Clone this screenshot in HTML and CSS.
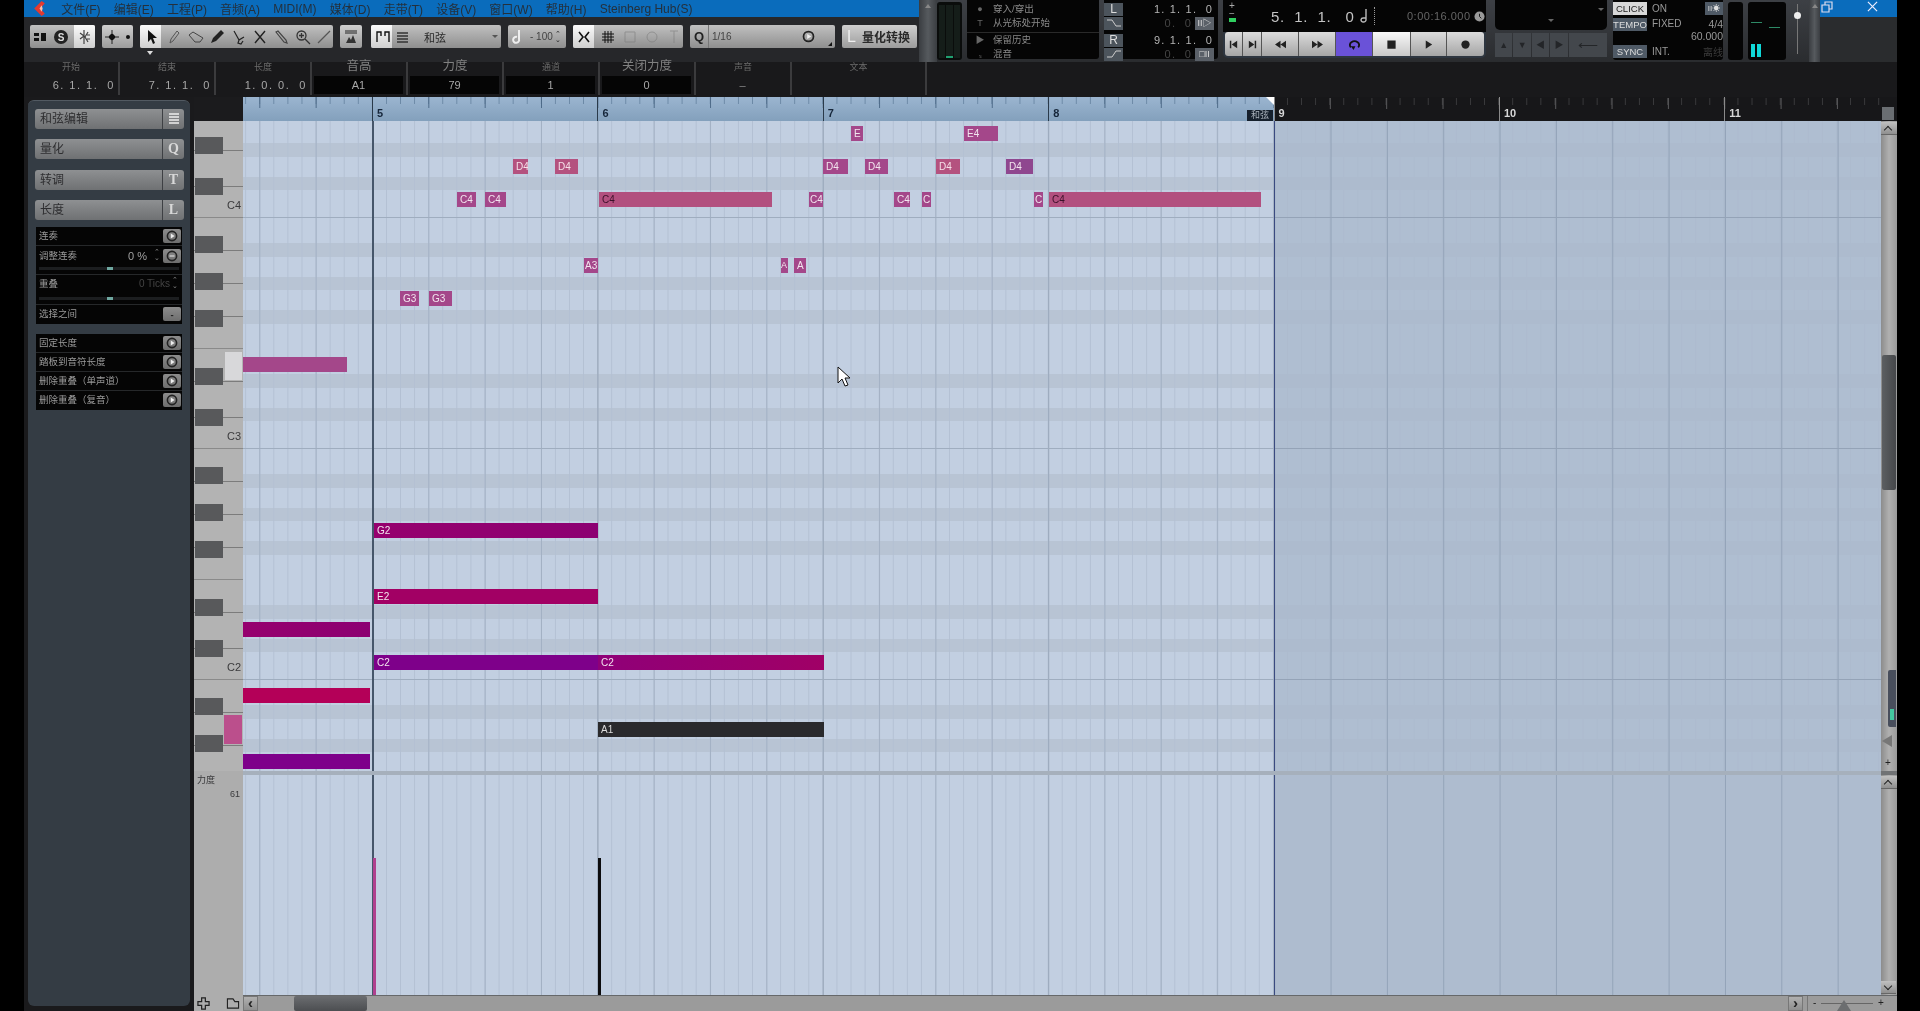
FILE: index.html
```html
<!DOCTYPE html>
<html lang="zh-CN">
<head>
    <meta charset="UTF-8">
    <title>Cubase Key Editor</title>
    <link rel="stylesheet" href="styles.css">
</head>
<body>
<svg class="defs" width="0" height="0">
    <symbol id="play-circle" viewBox="0 0 12 12"><circle cx="6" cy="6" r="4.6" fill="none" stroke="#222" stroke-width="1.6"/><path d="M4.8 3.6 8.6 6 4.8 8.4z" fill="#eee"/></symbol>
</svg>

<div class="app">
    <!-- Top area -->
    <div class="top-row">
        <div class="top-left">
            <div class="menubar">
                <svg class="logo" viewBox="0 0 14 16" width="15" height="17"><path d="M9 1 2 8l7 7 3-2-4-5 4-5z" fill="#e23a30"/><path d="M9 5 7 8l2 3 1-3z" fill="#f3c0b0"/></svg>
                <span>文件(F)</span><span>编辑(E)</span><span>工程(P)</span><span>音频(A)</span><span>MIDI(M)</span><span>媒体(D)</span><span>走带(T)</span><span>设备(V)</span><span>窗口(W)</span><span>帮助(H)</span><span>Steinberg Hub(S)</span>
            </div>
            <div class="toolbar">
                <div class="tb-group w-65">
                    <svg class="ic" viewBox="0 0 16 16"><path d="M2 4h5v3H2zM2 9h5v3H2zM9 4h5v8H9z" fill="#111"/></svg>
                    <svg class="ic" viewBox="0 0 16 16"><circle cx="8" cy="8" r="7" fill="#222"/><text x="8" y="11.5" text-anchor="middle" font-size="10" font-weight="700" fill="#ddd" font-family="Liberation Sans">S</text></svg>
                    <div class="tb-on w-21"><svg class="ic" viewBox="0 0 16 16"><path d="M7 1v14M3 4l4 3-4 3M11 3 8 8l3 5M13 6h-3M13 10h-3" fill="none" stroke="#444" stroke-width="1.2"/></svg></div>
                </div>
                <div class="tb-group w-31 light">
                    <svg class="ic" viewBox="0 0 16 16"><path d="M8 1v3M8 12v3M1 8h3M12 8h3" stroke="#222" fill="none"/><path d="M8 4l4 4-4 4-4-4z" fill="#111"/></svg>
                    <span class="dot"></span>
                </div>
                <div class="tool-wrap">
                    <div class="tb-group w-193 tools">
                        <div class="tb-on w-21"><svg class="ic" viewBox="0 0 16 16"><path d="M5 1v12l3-3 2 5 2-1-2-5h4z" fill="#111"/></svg></div>
                        <svg class="ic" viewBox="0 0 16 16"><path d="M4 14 5 10l6-8 2 2-6 8z" fill="none" stroke="#555"/></svg>
                        <svg class="ic" viewBox="0 0 16 16"><path d="M1 6l4-3 10 6-3 4H7z" fill="none" stroke="#444"/></svg>
                        <svg class="ic" viewBox="0 0 16 16"><path d="M2 14l2-5 6-6 3 3-6 6zM10 3l2-2 3 3-2 2" fill="#222"/></svg>
                        <svg class="ic" viewBox="0 0 16 16"><path d="M3 2l5 9M13 8l-5 3-1 3 3 1 2-3" fill="none" stroke="#222" stroke-width="1.2"/></svg>
                        <svg class="ic" viewBox="0 0 16 16"><path d="M3 2l10 12M13 2 3 14" fill="none" stroke="#222" stroke-width="1.4"/></svg>
                        <svg class="ic" viewBox="0 0 16 16"><path d="M3 3l2-1 8 9 1 3-3-1z" fill="none" stroke="#444" stroke-width="1.2"/></svg>
                        <svg class="ic" viewBox="0 0 16 16"><circle cx="6.5" cy="6.5" r="4.5" fill="none" stroke="#333" stroke-width="1.3"/><path d="M10 10l5 5M6.5 4v5M4 6.5h5" stroke="#333" stroke-width="1.3"/></svg>
                        <svg class="ic" viewBox="0 0 16 16"><path d="M2 14 14 2" stroke="#555" stroke-width="1.2"/></svg>
                    </div>
                    <span class="tool-mark"></span>
                </div>
                <div class="tb-group w-22 light">
                    <svg class="ic" viewBox="0 0 16 16"><path d="M2 2h12M2 4h12" stroke="#222"/><path d="M3 14l3-6 2 3 2-5 3 8z" fill="#333"/></svg>
                </div>
                <div class="tb-group w-130 chord">
                    <div class="tb-on w-21"><svg class="ic" viewBox="0 0 16 16"><path d="M2 13V3h4v4M10 7V3h4v10" fill="none" stroke="#111" stroke-width="1.4"/></svg></div>
                    <svg class="ic" viewBox="0 0 16 16"><path d="M2 4h11M2 7h11M2 10h11M2 13h11" stroke="#333" stroke-width="1.4"/></svg>
                    <span class="tb-text">和弦</span>
                    <span class="caret"></span>
                </div>
                <div class="tb-group w-58 swing">
                    <svg class="ic" viewBox="0 0 16 16"><path d="M8 1v9a3 3 0 1 1-2-2" fill="none" stroke="#eee" stroke-width="2"/></svg>
                    <span class="tb-text small">- 100</span>
                    <span class="spin">⌃<br>⌄</span>
                </div>
                <div class="tb-group w-109 grid-btns">
                    <div class="tb-on w-21"><svg class="ic" viewBox="0 0 16 16"><path d="M3 3l4 5-4 5M13 3 9 8l4 5" fill="none" stroke="#111" stroke-width="1.6"/></svg></div>
                    <svg class="ic" viewBox="0 0 16 16"><path d="M5 2v12M8 2v12M11 2v12M2 5h12M2 8h12M2 11h12" stroke="#111"/></svg>
                    <svg class="ic faint" viewBox="0 0 16 16"><path d="M3 3h10v10H3z" fill="none" stroke="#777"/></svg>
                    <svg class="ic faint" viewBox="0 0 16 16"><circle cx="8" cy="8" r="5" fill="none" stroke="#777"/></svg>
                    <svg class="ic faint" viewBox="0 0 16 16"><path d="M8 2v12M4 2h8" stroke="#777"/></svg>
                </div>
                <div class="tb-group w-145 quant">
                    <span class="q">Q</span>
                    <span class="tb-text small">1/16</span>
                    <svg class="ic push" viewBox="0 0 12 12"><use href="#play-circle"/></svg>
                    <span class="corner"></span>
                </div>
                <div class="tb-group w-75 light quant-btn"><span class="big-l">L</span><span class="tb-text">量化转换</span></div>
            </div>
        </div>

        <div class="transport-panel">
            <div class="strip"><span class="strip-up"></span></div>
            <div class="meter-box"><i></i><i></i><i></i></div>
            <div class="mode-box">
                <div class="mode-row"><span class="mode-ic">●</span>穿入/穿出</div>
                <div class="mode-row"><span class="mode-ic">T</span>从光标处开始</div>
                <div class="mode-row sep"><span class="mode-ic">▶</span>保留历史</div>
                <div class="mode-row"><span class="mode-ic">ₛ</span>混音</div>
            </div>
            <div class="locator-box">
                <div class="loc-row"><span class="loc-btn">L</span><span class="loc-val">1. 1. 1.  0</span></div>
                <div class="loc-row"><span class="loc-btn"><svg viewBox="0 0 16 10" width="16" height="10"><path d="M1 2h5l4 6h5" fill="none" stroke="#ccc"/></svg></span><span class="loc-val dim">0.  0</span><span class="loc-mini">II▷</span></div>
                <div class="loc-row top-gap"><span class="loc-btn">R</span><span class="loc-val">9. 1. 1.  0</span></div>
                <div class="loc-row"><span class="loc-btn"><svg viewBox="0 0 16 10" width="16" height="10"><path d="M1 8h5l4-6h5" fill="none" stroke="#ccc"/></svg></span><span class="loc-val dim">0.  0</span><span class="loc-mini">□II</span></div>
            </div>
            <div class="transport">
                <div class="position">
                    <div class="pm"><span>+</span><span>−</span><i></i></div>
                    <span class="pos-main">5.  1.  1.   0</span>
                    <svg class="note-ic" viewBox="0 0 10 16" width="10" height="16"><path d="M7 1v11a2.5 2 0 1 1-2-2h2" fill="none" stroke="#bbb" stroke-width="1.4"/></svg>
                    <span class="pos-bracket"></span>
                    <span class="pos-time">0:00:16.000</span>
                    <svg viewBox="0 0 12 12" width="11" height="11"><circle cx="6" cy="6" r="5.5" fill="#999"/><path d="M6 3v3l2 2" stroke="#111" fill="none"/></svg>
                </div>
                <div class="t-buttons">
                    <span class="t-btn w18"><svg viewBox="0 0 12 12" width="11" height="11"><path d="M2 2h1.6v8H2zM10 2v8L4 6z" fill="#222"/></svg></span>
                    <span class="t-btn w19"><svg viewBox="0 0 12 12" width="11" height="11"><path d="M8.4 2H10v8H8.4zM2 2v8l6-4z" fill="#222"/></svg></span>
                    <span class="t-btn w37"><svg viewBox="0 0 16 12" width="15" height="11"><path d="M8 2v8L2 6zM14 2v8L8 6z" fill="#222"/></svg></span>
                    <span class="t-btn w37"><svg viewBox="0 0 16 12" width="15" height="11"><path d="M2 2v8l6-4zM8 2v8l6-4z" fill="#222"/></svg></span>
                    <span class="t-btn w37 cycle"><svg viewBox="0 0 18 14" width="17" height="13"><path d="M5 10a5 4 0 1 1 8 0" fill="none" stroke="#111" stroke-width="2"/><path d="M5 9l5 0-2 4z" fill="#111"/></svg></span>
                    <span class="t-btn w38 lit"><svg viewBox="0 0 12 12" width="11" height="11"><path d="M1.5 1.5h9v9h-9z" fill="#222"/></svg></span>
                    <span class="t-btn w36"><svg viewBox="0 0 12 12" width="11" height="11"><path d="M3 1.5v9l7-4.5z" fill="#222"/></svg></span>
                    <span class="t-btn w37 last"><svg viewBox="0 0 12 12" width="11" height="11"><circle cx="6" cy="6" r="4.5" fill="#222"/></svg></span>
                </div>
            </div>
            <div class="marker-box">
                <div class="marker-top"><span class="mk-caret r"></span><span class="mk-caret"></span></div>
                <div class="marker-btns">
                    <span>▲</span><span>▼</span><span>◀</span><span>▶</span><span class="wide">⟵</span>
                </div>
            </div>
            <div class="click-box">
                <div class="click-row"><span class="c-tag on">CLICK</span><span>ON</span><span class="c-mini">II☀</span></div>
                <div class="click-row tall">
                    <span class="c-tag">TEMPO</span><span>FIXED</span>
                    <span class="c-right">4/4<br>60.000</span>
                </div>
                <div class="click-row last"><span class="c-tag">SYNC</span><span>INT.</span><span class="c-off">离线</span></div>
            </div>
            <div class="small-meter"></div>
            <div class="io-meter">
                <b class="l1"></b><b class="l2"></b><i class="c1"></i><i class="c2"></i>
            </div>
            <div class="out-slider"><span class="s-line"></span><span class="s-dot"></span></div>
            <div class="strip end"><span class="strip-up"></span></div>
        </div>

        <div class="win-col">
            <div class="winbar">
                <svg viewBox="0 0 12 12" width="12" height="12"><path d="M1 4h7v7H1zM4 4V1h7v7H8" fill="none" stroke="#dde" stroke-width="1.2"/></svg>
                <svg viewBox="0 0 12 12" width="11" height="11"><path d="M1 1l10 10M11 1 1 11" stroke="#eef" stroke-width="1.3"/></svg>
            </div>
        </div>
    </div>

    <div class="info-line">
        <div class="info-cell"><label>开始</label><span class="val">6. 1. 1.  0</span></div>
        <div class="info-cell"><label>结束</label><span class="val">7. 1. 1.  0</span></div>
        <div class="info-cell"><label>长度</label><span class="val">1. 0. 0.  0</span></div>
        <div class="info-cell boxed"><label class="big">音高</label><span class="val">A1</span></div>
        <div class="info-cell boxed"><label class="big">力度</label><span class="val">79</span></div>
        <div class="info-cell boxed"><label>通道</label><span class="val">1</span></div>
        <div class="info-cell boxed"><label class="big">关闭力度</label><span class="val">0</span></div>
        <div class="info-cell boxed none"><label>声音</label><span class="val">–</span></div>
        <div class="info-cell text-cell"><label>文本</label><span class="val"></span></div>
    </div>

    <!-- Editor -->
    <div class="workspace">
        <aside class="side">
            <div class="side-btn"><span>和弦编辑</span><b><svg viewBox="0 0 12 14" width="12" height="14"><path d="M1 2h10M1 5h10M1 8h10M1 11h10" stroke="#eee" stroke-width="1.6"/></svg></b></div>
            <div class="side-btn"><span>量化</span><b>Q</b></div>
            <div class="side-btn"><span>转调</span><b>T</b></div>
            <div class="side-btn"><span>长度</span><b>L</b></div>

            <div class="side-list first">
                <div class="side-row"><span>连奏</span><i class="go"><svg viewBox="0 0 12 12" width="12" height="12"><use href="#play-circle"/></svg></i></div>
                <div class="side-row h-29">
                    <span>调整连奏</span><em>0 %</em><u>⌃<br>⌄</u><i class="go"><svg viewBox="0 0 12 12" width="12" height="12"><circle cx="6" cy="6" r="4.6" fill="none" stroke="#222" stroke-width="1.6"/><path d="M3.5 6h5" stroke="#eee"/></svg></i>
                    <div class="fader"><s></s></div>
                </div>
                <div class="side-row h-30">
                    <span>重叠</span><em class="off">0 Ticks</em><u>⌃<br>⌄</u>
                    <div class="fader"><s></s></div>
                </div>
                <div class="side-row"><span>选择之间</span><i class="go minus">-</i></div>
            </div>

            <div class="side-list">
                <div class="side-row"><span>固定长度</span><i class="go"><svg viewBox="0 0 12 12" width="12" height="12"><use href="#play-circle"/></svg></i></div>
                <div class="side-row"><span>踏板到音符长度</span><i class="go"><svg viewBox="0 0 12 12" width="12" height="12"><use href="#play-circle"/></svg></i></div>
                <div class="side-row"><span>删除重叠（单声道）</span><i class="go"><svg viewBox="0 0 12 12" width="12" height="12"><use href="#play-circle"/></svg></i></div>
                <div class="side-row"><span>删除重叠（复音）</span><i class="go"><svg viewBox="0 0 12 12" width="12" height="12"><use href="#play-circle"/></svg></i></div>
            </div>
        </aside>

        <div class="ruler-corner"></div>
        <div class="ruler">
            <div class="ruler-loop"><span class="loop-tag">和弦</span></div>
            <div class="bars">
                <span>5</span><span>6</span><span>7</span><span>8</span><span>9</span><span>10</span><span>11</span>
            </div>
        </div>
        <div class="ruler-end"><span class="mini-down"></span></div>

        <div class="piano">
            <div class="octave">C4</div>
            <div class="octave">C3</div>
            <div class="octave">C2</div>
            <span class="key-hover"></span>
            <span class="key-pink"></span>
        </div>

        <div class="note-lane">
            <span class="past-end"></span>
            <span class="playhead"></span>

            <div class="note n-mauve" style="left:608px;top:5px;width:12px">E</div>
            <div class="note n-mauve" style="left:721px;top:5px;width:34px">E4</div>

            <div class="note n-rose" style="left:270px;top:38px;width:15px">D4</div>
            <div class="note n-rose" style="left:312px;top:38px;width:23px">D4</div>
            <div class="note n-mauve" style="left:580px;top:38px;width:25px">D4</div>
            <div class="note n-mauve" style="left:622px;top:38px;width:23px">D4</div>
            <div class="note n-rose" style="left:693px;top:38px;width:24px">D4</div>
            <div class="note n-plum" style="left:763px;top:38px;width:27px">D4</div>

            <div class="note n-mauve" style="left:214px;top:71px;width:19px">C4</div>
            <div class="note n-mauve" style="left:242px;top:71px;width:21px">C4</div>
            <div class="note n-rose-long" style="left:356px;top:71px;width:173px">C4</div>
            <div class="note n-mauve tight" style="left:566px;top:71px;width:14px">C4</div>
            <div class="note n-mauve" style="left:651px;top:71px;width:16px">C4</div>
            <div class="note n-mauve tight" style="left:679px;top:71px;width:9px">C</div>
            <div class="note n-mauve tight" style="left:791px;top:71px;width:9px">C</div>
            <div class="note n-rose-long" style="left:806px;top:71px;width:212px">C4</div>

            <div class="note n-mauve tight" style="left:341px;top:137px;width:14px">A3</div>
            <div class="note n-mauve flush" style="left:538px;top:137px;width:7px">A</div>
            <div class="note n-mauve" style="left:551px;top:137px;width:12px">A</div>

            <div class="note n-mauve" style="left:157px;top:170px;width:19px">G3</div>
            <div class="note n-mauve" style="left:186px;top:170px;width:23px">G3</div>

            <div class="note n-mauve" style="left:0;top:236px;width:104px"></div>

            <div class="note n-g2" style="left:131px;top:402px;width:224px">G2</div>
            <div class="note n-e2" style="left:131px;top:468px;width:224px">E2</div>
            <div class="note n-c2" style="left:131px;top:534px;width:224px">C2</div>
            <div class="note n-c2b" style="left:355px;top:534px;width:226px">C2</div>
            <div class="note n-a1" style="left:355px;top:601px;width:226px">A1</div>

            <div class="note n-g2" style="left:0;top:501px;width:127px"></div>
            <div class="note n-red" style="left:0;top:567px;width:127px"></div>
            <div class="note n-c2" style="left:0;top:633px;width:127px"></div>

            <svg class="mouse" viewBox="0 0 14 21" width="14" height="21"><path d="M1 1v16l4-4 3 7 3-1-3-7h5z" fill="#fff" stroke="#111"/></svg>
        </div>

        <div class="vscroll upper">
            <span class="sb-btn"></span>
            <span class="v-thumb"></span>
            <div class="v-zoom"><span class="vz-meter"></span><span class="vz-tri"></span><span class="vz-plus">+</span></div>
        </div>

        <div class="split-left"></div>
        <div class="splitter"></div>
        <div class="split-right"></div>

        <div class="vel-head"><span>力度</span><em>61</em></div>
        <div class="vel-lane">
            <span class="past-end"></span>
            <span class="playhead"></span>
            <span class="vel-bar pink" style="left:130px;height:137px"></span>
            <span class="vel-bar black" style="left:355px;height:137px"></span>
        </div>
        <div class="vscroll lower">
            <span class="sb-btn"></span>
            <span class="sb-btn down"></span>
        </div>

        <div class="corner-tools">
            <svg viewBox="0 0 14 14" width="13" height="13"><path d="M5 1h4v4h4v4H9v4H5V9H1V5h4z" fill="none" stroke="#222" stroke-width="1.3"/></svg>
            <svg viewBox="0 0 14 14" width="14" height="13"><path d="M1 2h6l2 3h4v7H1z" fill="none" stroke="#222" stroke-width="1.2"/></svg>
        </div>
        <div class="hscroll">
            <span class="hs-btn">‹</span>
            <div class="hs-track"><span class="hs-thumb"></span></div>
            <span class="hs-btn">›</span>
            <div class="hs-zoom"><span class="hz-minus">-</span><span class="hz-line"></span><span class="hz-tri"></span><span class="hz-plus">+</span></div>
        </div>
    </div>
</div>
</body>
</html>
```

FILE: styles.css
```css
/* Reset */
* {
    margin: 0;
    padding: 0;
    box-sizing: border-box;
}

html, body {
    width: 1920px;
    height: 1011px;
    overflow: hidden;
    background: #000;
}

body {
    font-family: "Liberation Sans", "Noto Sans CJK SC", sans-serif;
    font-size: 10px;
    color: #bbb;
}

.defs {
    position: absolute;
}

.app {
    width: 1873px;
    height: 1011px;
    margin-left: 24px;
    background: #1a1a1c;
    filter: blur(0.5px);
    display: flex;
    flex-direction: column;
}

/* Top area */
.top-row {
    display: flex;
    height: 62px;
}

.top-left {
    width: 895px;
    background: #26272a;
}

.menubar {
    height: 17px;
    background: #0a6cbc;
    display: flex;
    align-items: center;
    gap: 13.2px;
    padding-left: 8px;
    font-size: 12px;
    color: #24303c;
    white-space: nowrap;
}

.menubar .logo {
    margin-right: 1px;
}

.toolbar {
    display: flex;
    align-items: center;
    height: 23px;
    margin-top: 8px;
    padding-left: 6px;
    gap: 7px;
}

.tb-group {
    height: 23px;
    display: flex;
    align-items: center;
    background: linear-gradient(#c0c0c0, #8f8f8f);
    border-radius: 2px;
    overflow: hidden;
    color: #222;
    flex: none;
}

.tb-group.light {
    background: linear-gradient(#cfcfcf, #9c9c9c);
}

.w-65 { width: 65px; justify-content: space-between; padding-left: 2px; }
.w-31 { width: 31px; gap: 2px; padding-left: 2px; }
.w-193 { width: 193px; justify-content: space-between; padding-right: 1px; }
.w-22 { width: 22px; justify-content: center; }
.w-130 { width: 130px; margin-left: 2px; }
.w-58 { width: 58px; padding-left: 3px; }
.w-109 { width: 110px; gap: 6px; }
.w-145 { width: 145px; }
.w-75 { width: 75px; }

.tool-wrap {
    position: relative;
    flex: none;
    height: 23px;
}

.tool-mark {
    position: absolute;
    left: 7px;
    top: 26px;
    border: 3px solid transparent;
    border-top: 4px solid #ddd;
    border-bottom: 0;
}

.tb-on {
    height: 100%;
    display: flex;
    align-items: center;
    justify-content: center;
    background: linear-gradient(#fafafa, #cfcfcf);
    flex: none;
}

.w-21 { width: 21px; }

.ic {
    width: 16px;
    height: 16px;
    flex: none;
}

.ic.faint {
    opacity: 0.55;
}

.ic.push {
    margin-left: auto;
    margin-right: 16px;
    width: 13px;
    height: 13px;
}

.dot {
    width: 4px;
    height: 4px;
    border-radius: 50%;
    background: #111;
    margin-left: 4px;
}

.tb-text {
    font-size: 11px;
    color: #2a2a2a;
    white-space: nowrap;
}

.tb-text.small {
    font-size: 10px;
    color: #444;
    margin-left: 3px;
}

.spin {
    font-size: 7px;
    line-height: 6px;
    margin-left: 2px;
    color: #222;
}

.chord .ic {
    margin-left: 3px;
}

.chord .tb-text {
    margin-left: 13px;
}

.caret {
    margin-left: auto;
    margin-right: 3px;
    border: 3px solid transparent;
    border-top: 3px solid #555;
    margin-top: 3px;
}

.q {
    width: 19px;
    font-size: 13px;
    font-weight: 700;
    text-align: center;
    color: #222;
    border-right: 1px solid #777;
    height: 100%;
    line-height: 23px;
}

.corner {
    position: relative;
    right: 3px;
    top: 7px;
    border: 2.5px solid #111;
    border-left-color: transparent;
    border-top-color: transparent;
}

.big-l {
    font-size: 16px;
    color: #eee;
    margin: 0 6px 0 5px;
}

.quant-btn .tb-text {
    font-size: 12px;
    font-weight: 700;
}

/* Transport panel */
.transport-panel {
    width: 901px;
    height: 62px;
    display: flex;
    background: linear-gradient(#3d4045, #2a2c2f);
    gap: 5px;
    flex: none;
}

.strip {
    width: 18px;
    background: linear-gradient(90deg, #3a3d41, #565a5e, #3a3d41);
    flex: none;
    margin-right: -5px;
    text-align: center;
}

.strip.end {
    width: 11px;
    margin: 0;
}

.strip-up {
    display: block;
    margin: 4px auto 0;
    width: 0;
    border: 3px solid transparent;
    border-bottom: 4px solid #888;
    border-top: 0;
}

.meter-box {
    width: 25px;
    height: 58px;
    margin-top: 2px;
    background: #0a0c0b;
    border-radius: 3px;
    display: flex;
    justify-content: center;
    gap: 1px;
    padding: 3px 2px 2px;
    flex: none;
}

.meter-box i {
    flex: 1;
    background: #151d19;
}

.meter-box i:nth-child(2) {
    box-shadow: inset 0 -2px 0 #20a070;
}

.mode-box {
    width: 132px;
    height: 59px;
    background: #050505;
    border-radius: 0 0 3px 3px;
    padding-top: 2px;
    color: #8a8a8a;
    font-size: 9.5px;
    flex: none;
}

.mode-row {
    height: 14px;
    line-height: 14px;
    white-space: nowrap;
    display: flex;
}

.mode-row.sep {
    margin-top: 2px;
    border-top: 1px solid #2a2a2a;
    height: 15px;
}

.mode-ic {
    width: 26px;
    text-align: center;
    color: #666;
    font-size: 9px;
    flex: none;
}

.locator-box {
    width: 114px;
    height: 59px;
    background: #050505;
    border-radius: 0 0 3px 3px;
    padding-top: 2px;
    flex: none;
}

.loc-row {
    height: 14px;
    display: flex;
    align-items: center;
}

.loc-row.top-gap {
    margin-top: 3px;
}

.loc-btn {
    width: 19px;
    height: 13px;
    background: #4c545c;
    color: #ddd;
    font-size: 12px;
    line-height: 13px;
    text-align: center;
    display: flex;
    align-items: center;
    justify-content: center;
    flex: none;
}

.loc-val {
    flex: 1;
    text-align: right;
    padding-right: 5px;
    font-size: 11px;
    letter-spacing: 1.2px;
    white-space: pre;
    color: #b5b5b5;
}

.loc-val.dim {
    color: #444;
    padding-right: 3px;
}

.loc-mini {
    width: 19px;
    height: 13px;
    background: #5a6068;
    color: #ddd;
    font-size: 9px;
    line-height: 13px;
    text-align: center;
    margin-right: 4px;
}

.transport {
    width: 263px;
    flex: none;
}

.position {
    height: 32px;
    background: #050505;
    display: flex;
    align-items: center;
    color: #b5b5b5;
    position: relative;
    padding-left: 6px;
}

.pm {
    width: 12px;
    height: 28px;
    font-size: 10px;
    line-height: 8px;
    display: flex;
    flex-direction: column;
    color: #aaa;
    flex: none;
}

.pm i {
    width: 7px;
    height: 4px;
    background: #30d060;
}

.pos-main {
    font-size: 15px;
    margin-left: 30px;
    letter-spacing: 0.6px;
    white-space: pre;
    color: #c4c4c4;
    width: 88px;
    flex: none;
}

.note-ic {
    margin-left: 0;
}

.pos-bracket {
    width: 3px;
    height: 18px;
    border-right: 1px dotted #999;
    margin-left: 3px;
}

.pos-time {
    margin-left: 32px;
    margin-right: 3px;
    font-size: 11px;
    letter-spacing: 0.5px;
    color: #666;
    white-space: nowrap;
}

.t-buttons {
    height: 28px;
    margin-top: -2px;
    background: #23262a;
    border: 2px solid #2e3640;
    border-radius: 5px;
    display: flex;
    width: 263px;
    overflow: hidden;
}

.t-btn {
    height: 100%;
    flex: none;
    display: flex;
    align-items: center;
    justify-content: center;
    background: linear-gradient(#dcdcdc, #a5a5a5);
    border-right: 1px solid #555;
}

.t-btn.last { border-right: 0; flex: 1; }
.t-btn.cycle { background: #6a52d8; }
.t-btn.lit { background: linear-gradient(#f8f8f8, #c8c8c8); }
.w18 { width: 18px; }
.w19 { width: 19px; }
.w36 { width: 36px; }
.w37 { width: 37px; }
.w38 { width: 38px; }

.marker-box {
    width: 112px;
    flex: none;
    margin-left: 4px;
}

.marker-top {
    height: 30px;
    background: #050505;
    border-radius: 0 0 5px 5px;
    position: relative;
    display: flex;
    justify-content: center;
    align-items: flex-end;
    padding-bottom: 5px;
}

.mk-caret {
    border: 3px solid transparent;
    border-top: 3px solid #666;
}

.mk-caret.r {
    position: absolute;
    right: 3px;
    top: 8px;
}

.marker-btns {
    margin-top: 3px;
    height: 24px;
    display: flex;
    gap: 1px;
}

.marker-btns span {
    flex: 1;
    background: #43474c;
    color: #232528;
    font-size: 9px;
    line-height: 24px;
    text-align: center;
}

.marker-btns .wide {
    flex: 2.2;
    font-size: 14px;
}

.click-box {
    width: 110px;
    height: 60px;
    background: #050505;
    border-radius: 0 0 3px 3px;
    font-size: 10px;
    color: #999;
    flex: none;
    margin-left: 1px;
}

.click-row {
    height: 16px;
    padding-top: 1px;
    display: flex;
    align-items: center;
    gap: 5px;
    white-space: nowrap;
    position: relative;
}

.click-row.tall {
    height: 28px;
    align-items: flex-start;
    padding-top: 2px;
}

.click-row.last {
    height: 14px;
    padding-top: 0;
}

.c-tag {
    width: 34px;
    height: 13px;
    line-height: 13px;
    text-align: center;
    background: #4f5a66;
    color: #ddd;
    font-size: 9.5px;
    flex: none;
}

.c-tag.on {
    background: #d8d8d8;
    color: #222;
}

.c-mini {
    margin-left: auto;
    background: #4f5a66;
    color: #ddd;
    width: 18px;
    height: 13px;
    line-height: 13px;
    font-size: 8px;
    text-align: center;
}

.c-right {
    margin-left: auto;
    text-align: right;
    line-height: 12px;
    font-size: 10.5px;
    color: #999;
}

.c-off {
    margin-left: auto;
    color: #3c3c3c;
}

.small-meter {
    width: 15px;
    height: 58px;
    margin-top: 2px;
    background: #050505;
    border-radius: 3px;
    flex: none;
}

.io-meter {
    width: 38px;
    height: 58px;
    margin-top: 2px;
    background: #050505;
    border-radius: 3px;
    position: relative;
    flex: none;
}

.io-meter b,
.io-meter i {
    position: absolute;
}

.io-meter b {
    height: 1px;
    width: 11px;
    background: #2d8a66;
}

.l1 { left: 3px; top: 20px; }
.l2 { left: 21px; top: 25px; }

.io-meter i {
    width: 4px;
    height: 13px;
    bottom: 3px;
    background: #10d8d8;
}

.c1 { left: 3px; }
.c2 { left: 9px; }

.out-slider {
    width: 13px;
    position: relative;
    flex: none;
}

.s-line {
    position: absolute;
    left: 6px;
    top: 4px;
    height: 50px;
    width: 1px;
    background: #777;
}

.s-dot {
    position: absolute;
    left: 3px;
    top: 12px;
    width: 7px;
    height: 7px;
    border-radius: 50%;
    background: #eee;
}

.win-col {
    flex: 1;
    background: #2a2c2e;
}

.winbar {
    height: 17px;
    background: #0a6cbc;
    display: flex;
    align-items: flex-start;
    padding: 1px 0 0 1px;
    gap: 34px;
}

/* Info line */
.info-line {
    height: 35px;
    display: flex;
    background: #19191b;
    position: relative;
}

.info-cell {
    width: 96px;
    height: 33px;
    border-right: 2px solid #3b3b3d;
    position: relative;
    text-align: center;
    flex: none;
}

.info-cell label {
    display: block;
    height: 14px;
    line-height: 11px;
    font-size: 9px;
    color: #6a6a6a;
}

.info-cell label.big {
    font-size: 12.5px;
    color: #808080;
    line-height: 9px;
}

.info-cell .val {
    display: block;
    height: 18px;
    line-height: 18px;
    font-size: 11px;
    letter-spacing: 1.5px;
    color: #a8a8a8;
    white-space: pre;
    text-align: right;
    padding-right: 3px;
}

.boxed .val {
    background: #050505;
    text-align: center;
    margin: 0 3px 0 2px;
    padding: 0;
    letter-spacing: 0;
}

.none .val {
    background: none;
    color: #888;
}

.text-cell {
    width: 135px;
}

/* Workspace */
.workspace {
    flex: 1;
    display: grid;
    grid-template-columns: 170px 49px 1638px 16px;
    grid-template-rows: 24px 650px 4px 220px 16px;
}

.side {
    grid-row: 1 / 6;
    background: #343c44;
    margin: 3px 4px 5px 4px;
    width: 162px;
    border-radius: 6px;
    padding: 8px 6px 0 7px;
    border-top: 1px solid #525a62;
}

.side-btn {
    width: 149px;
    height: 20px;
    margin-bottom: 10.3px;
    background: linear-gradient(#8e9092, #6f7173);
    border-radius: 3px;
    display: flex;
    font-size: 12px;
    color: #2e2e30;
    line-height: 20px;
    padding-left: 5px;
}

.side-btn span {
    flex: 1;
}

.side-btn b {
    width: 22px;
    border-left: 1px solid #3e4044;
    display: flex;
    align-items: center;
    justify-content: center;
    color: #d8d8d8;
    font-family: "Liberation Serif", serif;
    font-size: 14px;
}

.side-list {
    width: 146px;
    margin-left: 1px;
    background: #050505;
    padding-bottom: 1px;
}

.side-list.first {
    margin-top: -3px;
    margin-bottom: 10px;
}

.side-row {
    height: 19px;
    display: flex;
    align-items: center;
    padding: 0 1px 0 3px;
    font-size: 9.5px;
    color: #9a9a9a;
    position: relative;
    border-bottom: 1px solid #26282a;
    white-space: nowrap;
}

.side-row:last-child {
    border-bottom: 0;
    height: 18px;
}

.side-row.h-29 {
    height: 29px;
    align-items: flex-start;
    padding-top: 3px;
}

.side-row.h-30 {
    height: 30px;
    align-items: flex-start;
    padding-top: 2px;
}

.side-row span {
    flex: 1;
    line-height: 14px;
}

.side-row em {
    font-style: normal;
    font-size: 11px;
    line-height: 14px;
    margin-right: 7px;
    color: #a0a0a0;
}

.side-row em.off {
    color: #444;
    font-size: 10px;
    margin-right: 2px;
}

.side-row u {
    text-decoration: none;
    font-size: 7px;
    line-height: 6px;
    width: 9px;
    color: #888;
}

.go {
    width: 18px;
    height: 14px;
    background: linear-gradient(#8c8c8c, #6e6e6e);
    border-radius: 2px;
    display: flex;
    align-items: center;
    justify-content: center;
    font-style: normal;
    color: #222;
    font-weight: 700;
    flex: none;
}

.fader {
    position: absolute;
    left: 3px;
    right: 3px;
    bottom: 4px;
    height: 3px;
    background: #1c1e20;
}

.fader s {
    position: absolute;
    left: 68px;
    top: 0;
    width: 6px;
    height: 3px;
    background: #6fa8a0;
}

.ruler-corner {
    grid-column: 2;
    grid-row: 1;
    background: #1b1b1d;
}

.ruler {
    grid-column: 3;
    grid-row: 1;
    position: relative;
    overflow: hidden;
    background-color: #171719;
    background-image:
        linear-gradient(90deg, #5a5a5c 1px, transparent 1px),
        linear-gradient(90deg, #3a3a3c 1px, transparent 1px);
    background-size: 56.35px 11px, 14.09px 7px;
    background-position: 16.3px 1px, 2.2px 1px;
    background-repeat: repeat-x;
}

.ruler-loop {
    position: absolute;
    left: 0;
    top: 0;
    width: 1031px;
    height: 24px;
    background-image:
        linear-gradient(90deg, #4d6a88 1px, transparent 1px),
        linear-gradient(90deg, #6b88a5 1px, transparent 1px),
        linear-gradient(#9bb5d0, #83a0bc);
    background-size: 56.35px 11px, 14.09px 7px, 100% 100%;
    background-position: 16.3px 0, 2.2px 0, 0 0;
    background-repeat: repeat-x, repeat-x, no-repeat;
}

.ruler-loop::after {
    content: "";
    position: absolute;
    right: 0;
    top: 0;
    border: 4px solid transparent;
    border-top-color: #fff;
    border-right-color: #fff;
}

.loop-tag {
    position: absolute;
    right: 1px;
    bottom: 0;
    width: 26px;
    height: 11px;
    line-height: 11px;
    text-align: center;
    background: #16202c;
    color: #a8b0ba;
    font-size: 9px;
}

.bars {
    position: relative;
    display: flex;
    height: 100%;
    margin-left: 129px;
}

.bars span {
    width: 225.4px;
    flex: none;
    border-left: 1px solid #2a3a4a;
    padding: 9px 0 0 4px;
    font-size: 11px;
    font-weight: 700;
    line-height: 14px;
    color: #16263a;
}

.bars span:nth-child(n+5) {
    color: #d8d8d8;
    border-left-color: #8a8a8a;
}

.ruler-end {
    grid-column: 4;
    grid-row: 1;
    background: #171719;
    position: relative;
}

.mini-down {
    position: absolute;
    left: 1px;
    top: 10px;
    width: 12px;
    height: 13px;
    background: #6a6e72;
}

.piano {
    grid-column: 2;
    grid-row: 2;
    position: relative;
    padding-top: 75px;
    overflow: hidden;
    background-color: #b3b3b3;
    background-image:
        linear-gradient(to bottom,
            transparent 16px, #58595b 16px, #58595b 33px, transparent 33px,
            transparent 57px, #58595b 57px, #58595b 74px, transparent 74px,
            transparent 115px, #58595b 115px, #58595b 132px, transparent 132px,
            transparent 152px, #58595b 152px, #58595b 169px, transparent 169px,
            transparent 189px, #58595b 189px, #58595b 206px, transparent 206px),
        linear-gradient(to bottom,
            transparent 29px, #7c7c7c 29px, #7c7c7c 30px, transparent 30px,
            transparent 65px, #7c7c7c 65px, #7c7c7c 66px, transparent 66px,
            transparent 96px, #8a8a8a 96px, #8a8a8a 97px, transparent 97px,
            transparent 129px, #7c7c7c 129px, #7c7c7c 130px, transparent 130px,
            transparent 162px, #7c7c7c 162px, #7c7c7c 163px, transparent 163px,
            transparent 195px, #7c7c7c 195px, #7c7c7c 196px, transparent 196px,
            transparent 227px, #8a8a8a 227px, #8a8a8a 228px, transparent 228px);
    background-size: 28px 231px, 100% 231px;
    background-position: 1px 0, 0 0;
    background-repeat: repeat-y;
}

.octave {
    height: 231px;
    text-align: right;
    padding-right: 2px;
    font-size: 11px;
    line-height: 18px;
    color: #3a3a3c;
}

.key-hover {
    position: absolute;
    left: 31px;
    top: 231px;
    width: 17px;
    height: 28px;
    background: #d8d8da;
}

.key-pink {
    position: absolute;
    left: 30px;
    top: 594px;
    width: 18px;
    height: 29px;
    background: #bb4f8c;
}

.note-lane,
.vel-lane {
    position: relative;
    overflow: hidden;
    background-color: #c2cfe1;
    background-image:
        linear-gradient(90deg, #9dabbd 1px, transparent 1px),
        linear-gradient(90deg, #a3b1c4 1px, transparent 1px),
        linear-gradient(90deg, #b3c0d3 1px, transparent 1px);
    background-size: 225.4px 100%, 56.35px 100%, 14.09px 100%;
    background-position: 129px 0, 16.3px 0, 2.2px 0;
}

.note-lane {
    grid-column: 3;
    grid-row: 2;
    background-image:
        linear-gradient(to bottom,
            transparent 96px, #9fadbf 96px, #9fadbf 97px, transparent 97px),
        linear-gradient(90deg, #9dabbd 1px, transparent 1px),
        linear-gradient(90deg, #a3b1c4 1px, transparent 1px),
        linear-gradient(90deg, #b3c0d3 1px, transparent 1px),
        linear-gradient(to bottom,
            transparent 22px, #b8c4d4 22px, #b8c4d4 36px, transparent 36px,
            transparent 56px, #b8c4d4 56px, #b8c4d4 69px, transparent 69px,
            transparent 122px, #b8c4d4 122px, #b8c4d4 136px, transparent 136px,
            transparent 156px, #b8c4d4 156px, #b8c4d4 169px, transparent 169px,
            transparent 189px, #b8c4d4 189px, #b8c4d4 203px, transparent 203px);
    background-size: 100% 231px, 225.4px 100%, 56.35px 100%, 14.09px 100%, 100% 231px;
    background-position: 0 0, 129px 0, 16.3px 0, 2.2px 0, 0 0;
}

.past-end {
    position: absolute;
    left: 1031px;
    right: 0;
    top: 0;
    bottom: 0;
    border-left: 1px solid #3a4a80;
    background-color: rgba(171, 185, 205, 0.82);
    background-image:
        linear-gradient(to bottom,
            transparent 96px, #94a3b7 96px, #94a3b7 97px, transparent 97px),
        linear-gradient(90deg, #93a3b8 1px, transparent 1px);
    background-size: 100% 231px, 56.35px 100%;
    background-position: 0 0, -0.8px 0;
}

.vel-lane .past-end {
    background-color: #aebccf;
    background-image: linear-gradient(90deg, #93a3b8 1px, transparent 1px);
    background-size: 56.35px 100%;
    background-position: -0.8px 0;
}

.playhead {
    position: absolute;
    left: 129px;
    top: 0;
    bottom: 0;
    width: 1.5px;
    background: #46566a;
}

.note {
    position: absolute;
    height: 15px;
    line-height: 15px;
    padding-left: 3px;
    font-size: 10px;
    color: #f2e4ee;
    overflow: hidden;
    white-space: nowrap;
}

.note.tight {
    padding-left: 1px;
}

.note.flush {
    padding-left: 0;
    font-size: 9px;
}

.n-mauve { background: #a4478a; }
.n-plum { background: #8f478f; }
.n-rose { background: #b4527f; color: #f5dfe8; }
.n-rose-long { background: #b2507f; color: #3a1028; }
.n-g2 { background: linear-gradient(90deg, #96006e, #8c0072); }
.n-e2 { background: #a20064; }
.n-c2 { background: #7e008a; }
.n-c2b { background: linear-gradient(90deg, #8f0078, #a00066); }
.n-red { background: #b40058; }
.n-a1 { background: #2a2a2d; color: #ddd; }

.mouse {
    position: absolute;
    left: 594px;
    top: 245px;
}

.vscroll {
    background: linear-gradient(90deg, #8c8c8c, #b0b0b0, #9a9a9a);
    position: relative;
    grid-column: 4;
}

.vscroll.upper {
    grid-row: 2;
}

.vscroll.lower {
    grid-row: 4;
}

.sb-btn {
    display: block;
    height: 13px;
    margin-top: 1px;
    background: linear-gradient(#c0c0c0, #8f8f8f);
    text-align: center;
    border-bottom: 1px solid #666;
    position: relative;
}

.sb-btn::after {
    content: "";
    position: absolute;
    left: 4px;
    top: 5px;
    width: 5px;
    height: 5px;
    border-left: 1.5px solid #222;
    border-top: 1.5px solid #222;
    transform: rotate(45deg);
}

.sb-btn.down {
    position: absolute;
    left: 0;
    right: 1px;
    bottom: 1px;
}

.sb-btn.down::after {
    top: 2px;
    transform: rotate(225deg);
}

.v-thumb {
    position: absolute;
    top: 234px;
    left: 1px;
    width: 14px;
    height: 135px;
    background: linear-gradient(90deg, #5c5f62, #45474a);
    border-radius: 2px;
}

.v-zoom {
    position: absolute;
    left: 0;
    right: 0;
    bottom: 0;
    height: 101px;
}

.vz-meter {
    position: absolute;
    left: 7px;
    top: 0;
    width: 8px;
    height: 57px;
    background: #484e5c;
    border-radius: 2px 0 0 2px;
}

.vz-meter::after {
    content: "";
    position: absolute;
    left: 2px;
    top: 39px;
    width: 4px;
    height: 11px;
    background: #44c8a0;
}

.vz-tri {
    position: absolute;
    left: 1px;
    top: 65px;
    border: 6px solid transparent;
    border-right: 10px solid #777;
    border-left: 0;
}

.vz-plus {
    position: absolute;
    left: 4px;
    bottom: 3px;
    font-size: 10px;
    line-height: 10px;
    color: #222;
}

.split-left {
    grid-column: 2;
    grid-row: 3;
    background: #adadad;
}

.splitter {
    grid-column: 3;
    grid-row: 3;
    background: #a6b0bc;
}

.split-right {
    grid-column: 4;
    grid-row: 3;
    background: #707274;
}

.vel-head {
    grid-column: 2;
    grid-row: 4;
    background: #adadad;
    color: #3a3a3c;
    padding: 0 3px;
    font-size: 9px;
}

.vel-head span {
    display: block;
    line-height: 13px;
    margin-top: -1px;
}

.vel-head em {
    display: block;
    font-style: normal;
    text-align: right;
    line-height: 13px;
    margin-top: 1px;
    font-size: 9px;
}

.vel-lane {
    grid-column: 3;
    grid-row: 4;
}

.vel-bar {
    position: absolute;
    bottom: 0;
    width: 3px;
}

.vel-bar.pink { background: #b0408e; }
.vel-bar.black { background: #0c0c0e; }

.corner-tools {
    grid-column: 2;
    grid-row: 5;
    background: #adadad;
    display: flex;
    justify-content: space-between;
    align-items: center;
    padding: 0 3px;
}

.hscroll {
    grid-column: 3 / 5;
    grid-row: 5;
    display: flex;
    background: #9b9b9b;
    border-top: 1px solid #66686a;
}

.hs-btn {
    width: 15px;
    flex: none;
    text-align: center;
    line-height: 12px;
    font-size: 15px;
    font-weight: 700;
    color: #222;
    background: linear-gradient(#b0b0b0, #8e8e8e);
    border: 1px solid #777;
}

.hs-track {
    flex: 1;
    position: relative;
}

.hs-thumb {
    position: absolute;
    left: 36px;
    top: 0;
    bottom: 0;
    width: 73px;
    background: linear-gradient(#6b6d70, #4c4e51);
    border-radius: 2px;
}

.hs-zoom {
    width: 90px;
    margin-left: 4px;
    border-left: 1px solid #777;
    position: relative;
    flex: none;
    color: #222;
    font-size: 10px;
    line-height: 13px;
}

.hz-minus {
    position: absolute;
    left: 5px;
    top: 0;
}

.hz-plus {
    position: absolute;
    left: 70px;
    top: 0;
}

.hz-line {
    position: absolute;
    left: 13px;
    width: 52px;
    top: 7px;
    height: 1px;
    background: #666;
}

.hz-tri {
    position: absolute;
    left: 29px;
    bottom: 0;
    border: 7px solid transparent;
    border-top: 0;
    border-bottom: 11px solid #6c6e70;
}
```
